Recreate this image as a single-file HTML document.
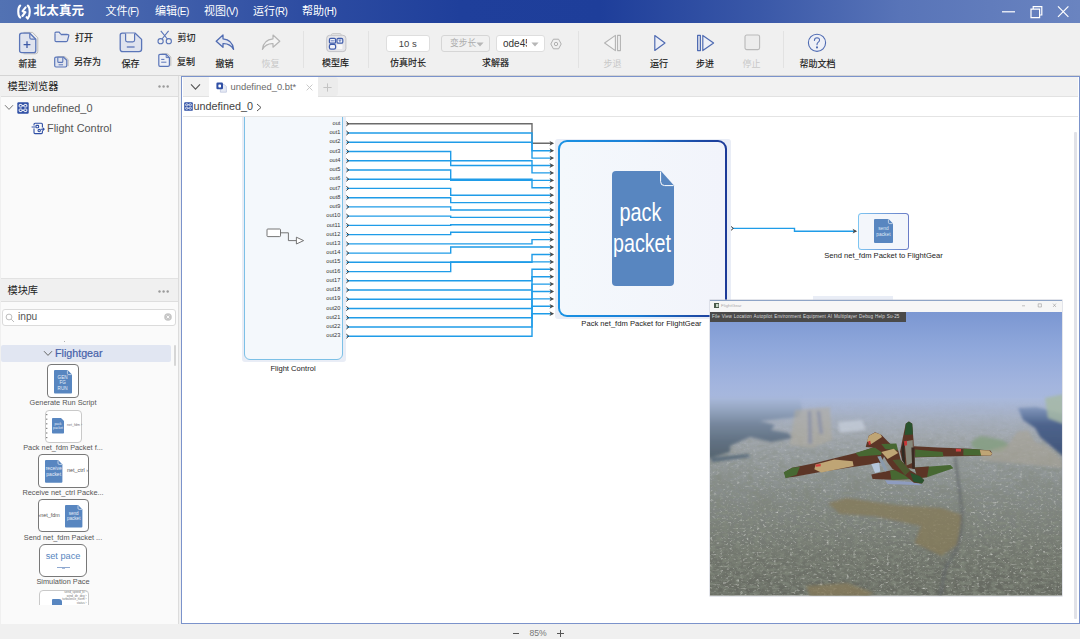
<!DOCTYPE html>
<html lang="zh-CN">
<head>
<meta charset="utf-8">
<title>北太真元</title>
<style>
*{box-sizing:border-box;margin:0;padding:0}
html,body{width:1080px;height:639px;overflow:hidden;background:#f0f0f0}
body{position:relative;font-family:"Liberation Sans","Noto Sans CJK SC",sans-serif;font-size:10px;color:#222}
.abs{position:absolute}
.t{position:absolute;white-space:nowrap;line-height:1}
.c{transform:translateX(-50%)}
svg{position:absolute;overflow:visible}
/* title */
#title{left:0;top:0;width:1080px;height:23px;background:linear-gradient(90deg,#5272b3 0,#4766ae 120px,#2e4da2 300px,#1f3f9b 460px,#1e3e9a 600px,#3a58a8 760px,#5874b8 900px,#6a84c0 1080px)}
#title .m{color:#fff;font-size:11px;top:6px}
#title .la{font-size:10px;letter-spacing:-0.55px}
#brand{color:#fff;font-size:12.5px;font-weight:bold;left:33.5px;top:5px;letter-spacing:0.2px}
/* toolbar */
#tb{left:0;top:23px;width:1080px;height:53px;background:#f0f0f0;border-bottom:1px solid #d4d4d4}
.lb{font-size:9px;color:#161616;font-weight:400;-webkit-text-stroke:0.15px #161616}
.lb.dis{color:#c8c8c8;-webkit-text-stroke:0}
.sep{position:absolute;top:31px;width:1px;height:37px;background:#e2e2e2}
.inp{position:absolute;top:35px;height:17px;border:1px solid #dedede;border-radius:3px;background:#fff;font-size:9.5px;color:#444}
/* panels */
.ph{position:absolute;left:1px;width:177px;height:21px;background:#f0f0f0;border-bottom:1px solid #dedede}
.ph .t{left:6.5px;top:5.5px;font-size:10.2px;color:#222}
.pb{position:absolute;left:1px;width:177px;background:#fafafa}
.il{font-size:7.35px;color:#555}
.bx{position:absolute;background:#fff;border:1px solid #787878;border-radius:4px}
</style>
</head>
<body>
<!-- ================= TITLE BAR ================= -->
<div id="title" class="abs">
  <svg style="left:16px;top:4px" width="16" height="16" viewBox="0 0 16 16" fill="none" stroke="#fff" stroke-width="2.1" stroke-linecap="round" stroke-linejoin="round">
    <path d="M4.2 1.6C1.6 3.4 1.6 11.2 4.2 13.6"/>
    <path d="M11.8 1.6C14.4 3.6 14.4 11.4 11.8 14.6L10.6 13.2"/>
    <path d="M9.6 3.4L6.6 7.2L9.4 8.2L6.4 12"/>
  </svg>
  <div id="brand" class="t">北太真元</div>
  <div class="t m" style="left:105.5px">文件<span class="la">(F)</span></div>
  <div class="t m" style="left:155px">编辑<span class="la">(E)</span></div>
  <div class="t m" style="left:204px">视图<span class="la">(V)</span></div>
  <div class="t m" style="left:253px">运行<span class="la">(R)</span></div>
  <div class="t m" style="left:302px">帮助<span class="la">(H)</span></div>
  <svg style="left:1000px;top:3px" width="76" height="18" viewBox="0 0 76 18" fill="none" stroke="#fff" stroke-width="1.2">
    <path d="M2 8.8H15"/>
    <path d="M31 6.2H39.6V14.6H31Z"/><path d="M33.2 6V3.6H41.8V12H39.8"/>
    <path d="M58 3.4L68.4 13.8M68.4 3.4L58 13.8"/>
  </svg>
</div>

<!-- ================= TOOLBAR ================= -->
<div id="tb" class="abs"></div>
<!-- new -->
<svg style="left:18px;top:31px" width="22" height="24" viewBox="0 0 22 24" fill="none" stroke-linejoin="round">
  <path d="M5.5 1.4H14.6L19.8 6.8V20.4Q19.8 22.8 17.4 22.8H5.5" stroke="#bdbdbd" stroke-width="1"/>
  <path d="M3.8 2.2H11.8L17.8 8.2V19.4Q17.8 21.6 15.6 21.6H3.8Q1.6 21.6 1.6 19.4V4.4Q1.6 2.2 3.8 2.2Z" fill="#dfe3ee" stroke="#5a75b8" stroke-width="1.3"/>
  <path d="M11.8 2.4V6.4Q11.8 8.2 13.6 8.2H17.6" stroke="#5a75b8" stroke-width="1.2"/>
  <path d="M9 10.2V17M5.6 13.6H12.4" stroke="#3e5aa6" stroke-width="1.3"/>
</svg>
<div class="t lb c" style="left:27.6px;top:60px">新建</div>
<!-- open -->
<svg style="left:54px;top:31px" width="16" height="12" viewBox="0 0 16 12" fill="none" stroke="#5a75b8" stroke-width="1.2" stroke-linejoin="round">
  <path d="M1 2.2Q1 1.2 2 1.2H5.2L6.8 3.4H13.4" />
  <path d="M1 2.2V9.4Q1 10.6 2.2 10.6H12.2Q13.2 10.6 13.5 9.6L14.8 4.6Q15 3.6 14 3.6H6.8" fill="#e4e7f0"/>
</svg>
<div class="t lb" style="left:75px;top:33.8px">打开</div>
<!-- save as -->
<svg style="left:54px;top:56px" width="15" height="12" viewBox="0 0 15 12" fill="none" stroke-linejoin="round">
  <path d="M3.4 0.6H10.8L14.2 3.6V10.2" stroke="#bdbdbd" stroke-width="1"/>
  <path d="M2 1.2H9.6L12.8 4.2V9.6Q12.8 11 11.4 11H2Q0.7 11 0.7 9.6V2.6Q0.7 1.2 2 1.2Z" fill="#e0e4ee" stroke="#5a75b8" stroke-width="1.2"/>
  <path d="M3.8 1.4V5.4Q3.8 6.4 4.8 6.4H7.8Q8.8 6.4 8.8 5.4V1.4" stroke="#5a75b8" stroke-width="1.1"/>
  <path d="M4.6 8.8H9" stroke="#5a75b8" stroke-width="1"/>
</svg>
<div class="t lb" style="left:74px;top:57.7px">另存为</div>
<!-- save -->
<svg style="left:119px;top:32px" width="24" height="21" viewBox="0 0 24 21" fill="none" stroke-linejoin="round">
  <path d="M3.2 1.2H16.2L22.6 7.4V17Q22.6 19.6 20 19.6H3.8Q1.2 19.6 1.2 17V3.2Q1.2 1.2 3.2 1.2Z" fill="#dfe3ee" stroke="#5a75b8" stroke-width="1.3"/>
  <path d="M6.6 1.4V8Q6.6 9.8 8.4 9.8H13.8Q15.6 9.8 15.6 8V1.4" fill="#f0f0f0" stroke="#5a75b8" stroke-width="1.2"/>
  <path d="M7.8 15H15.6" stroke="#5a75b8" stroke-width="1.3"/>
</svg>
<div class="t lb c" style="left:130.5px;top:60px">保存</div>
<!-- cut -->
<svg style="left:157px;top:30px" width="16" height="15" viewBox="0 0 16 15" fill="none" stroke="#5a75b8" stroke-width="1.1">
  <circle cx="3.6" cy="11.2" r="2.6"/><circle cx="11.8" cy="11.2" r="2.6"/>
  <path d="M5 9L11.6 0.8M10.4 9L3.8 0.8"/>
</svg>
<div class="t lb" style="left:177.5px;top:33.8px">剪切</div>
<!-- copy -->
<svg style="left:157.5px;top:53px" width="14" height="15" viewBox="0 0 14 15" fill="none" stroke-linejoin="round">
  <path d="M3.6 0.8H9.6L12.8 4V12.8" stroke="#bdbdbd" stroke-width="1"/>
  <path d="M2 1.4H8.2L11.4 4.6V12Q11.4 13.4 10 13.4H2Q0.8 13.4 0.8 12V2.6Q0.8 1.4 2 1.4Z" fill="#eef0f6" stroke="#5a75b8" stroke-width="1.2"/>
  <path d="M8.2 1.6V4.6H11.2" stroke="#5a75b8" stroke-width="1"/>
  <path d="M3.2 6.4H6.4M3.2 9.2H8.4" stroke="#5a75b8" stroke-width="1"/>
</svg>
<div class="t lb" style="left:177px;top:57.7px">复制</div>
<!-- undo -->
<svg style="left:215px;top:34px" width="20" height="17" viewBox="0 0 20 17" fill="none" stroke-linejoin="round">
  <path d="M8 1L1.2 7.2L8 13.2V9.6Q15 9.2 18.6 15.4Q17.6 5.6 8 4.8Z" fill="#e4e7f0" stroke="#4f6bb2" stroke-width="1.3"/>
</svg>
<div class="t lb c" style="left:224.5px;top:60px">撤销</div>
<!-- redo -->
<svg style="left:261px;top:34px" width="20" height="17" viewBox="0 0 20 17" fill="none" stroke-linejoin="round">
  <path d="M12 1L18.8 7.2L12 13.2V9.6Q5 9.2 1.4 15.4Q2.4 5.6 12 4.8Z" fill="#f4f4f4" stroke="#b5b5b5" stroke-width="1.2"/>
</svg>
<div class="t lb c dis" style="left:270.5px;top:60px">恢复</div>
<div class="sep" style="left:303px"></div>
<!-- model lib -->
<svg style="left:326px;top:33px" width="21" height="20" viewBox="0 0 21 20" fill="none" stroke-linejoin="round">
  <path d="M5.6 2.4V1.5Q5.6 0.7 6.4 0.7H14.2Q15 0.7 15 1.5V2.4" stroke="#c6c6c6" stroke-width="1"/>
  <rect x="0.7" y="2.3" width="19.2" height="16.3" rx="3" fill="#e5e5e9" stroke="#c3c3c7" stroke-width="1"/>
  <rect x="3.4" y="5.4" width="6.2" height="4.8" rx="1.3" fill="#f1f3fa" stroke="#3f5cab" stroke-width="1.2"/>
  <rect x="11" y="5.4" width="5.8" height="4.8" rx="1.3" fill="#f1f3fa" stroke="#3f5cab" stroke-width="1.2"/>
  <rect x="3.4" y="11.4" width="6.2" height="4.8" rx="1.6" fill="#f1f3fa" stroke="#3f5cab" stroke-width="1.2"/>
  <rect x="11.2" y="11.6" width="5.2" height="4.4" rx="0.8" fill="#f8f8f8"/>
  <path d="M4.6 7.8H7.6L8.6 7.8M12.4 7H15.4M13.9 7V9" stroke="#3f5cab" stroke-width="0.8"/>
</svg>
<div class="t lb c" style="left:335.5px;top:59.4px">模型库</div>
<div class="sep" style="left:367.5px"></div>
<!-- sim time -->
<div class="inp" style="left:386px;width:43.5px"><div class="t c" style="left:50%;top:3px">10 s</div></div>
<div class="t lb c" style="left:408px;top:59.4px">仿真时长</div>
<div class="inp" style="left:440.5px;width:49px;background:#f1f1f1;border-color:#d6d6d6;color:#adadad"><div class="t" style="left:8.5px;top:3px;font-size:8.7px">变步长</div>
  <svg style="left:34px;top:5.5px" width="8" height="5" viewBox="0 0 8 5"><path d="M0.4 0.4H7.6L4 4.4Z" fill="#b7b7b7"/></svg></div>
<div class="inp" style="left:495.5px;width:49px"><div class="t" style="left:6.5px;top:2.5px;width:23.6px;overflow:hidden;font-size:10px;color:#333">ode45</div>
  <svg style="left:34px;top:5.5px" width="8" height="5" viewBox="0 0 8 5"><path d="M0.4 0.4H7.6L4 4.4Z" fill="#b7b7b7"/></svg></div>
<svg style="left:549.5px;top:37.5px" width="12" height="12" viewBox="0 0 12 12" fill="none" stroke="#a8a8a8" stroke-width="0.9" stroke-linejoin="round">
  <path d="M3.4 1.2H8.6L11.2 6L8.6 10.8H3.4L0.8 6Z"/><circle cx="6" cy="6" r="1.7"/>
</svg>
<div class="t lb c" style="left:495.5px;top:59.4px">求解器</div>
<div class="sep" style="left:578px"></div>
<!-- step back -->
<svg style="left:603px;top:34px" width="20" height="18" viewBox="0 0 20 18" fill="none" stroke="#b3b3b3" stroke-width="1.1" stroke-linejoin="round">
  <path d="M12.4 1.4L1.6 9L12.4 16.6Z" fill="#f5f5f5"/><path d="M14.6 1.4H17.4V16.6H14.6Z" fill="#f5f5f5"/>
</svg>
<div class="t lb c dis" style="left:612.5px;top:60px">步退</div>
<!-- run -->
<svg style="left:653px;top:34px" width="14" height="18" viewBox="0 0 14 18" fill="none" stroke="#4f6bb2" stroke-width="1.2" stroke-linejoin="round">
  <path d="M1.8 1.6L12 9L1.8 16.4Z" fill="#eef0f7"/>
</svg>
<div class="t lb c" style="left:659px;top:60px">运行</div>
<!-- step fwd -->
<svg style="left:696px;top:34px" width="20" height="18" viewBox="0 0 20 18" fill="none" stroke="#4f6bb2" stroke-width="1.2" stroke-linejoin="round">
  <path d="M1.6 1.4H4.4V16.6H1.6Z" fill="#dfe3ee"/><path d="M6.8 1.4L17.6 9L6.8 16.6Z" fill="#eef0f7"/>
</svg>
<div class="t lb c" style="left:705px;top:60px">步进</div>
<!-- stop -->
<svg style="left:744px;top:34px" width="17" height="17" viewBox="0 0 17 17" fill="none">
  <rect x="1" y="1" width="14.6" height="14.6" rx="1.8" fill="#ececec" stroke="#b9b9b9" stroke-width="1.1"/>
</svg>
<div class="t lb c dis" style="left:751.5px;top:60px">停止</div>
<div class="sep" style="left:782.5px"></div>
<!-- help -->
<svg style="left:807px;top:33px" width="20" height="20" viewBox="0 0 20 20" fill="none" stroke="#4f6bb2" stroke-width="1.1" stroke-linecap="round">
  <circle cx="10" cy="9.8" r="8.6" fill="#eef0f7"/>
  <path d="M7.4 7.4Q7.6 4.8 10 4.8Q12.6 4.9 12.5 7.2Q12.4 8.6 10.8 9.6Q10 10.2 10 11.8"/>
  <circle cx="10" cy="14.4" r="0.5" fill="#4f6bb2"/>
</svg>
<div class="t lb c" style="left:817.5px;top:60px">帮助文档</div>

<!-- ================= LEFT PANELS ================= -->
<div class="abs" style="left:0;top:76px;width:181px;height:548px;background:#f0f0f0"></div>
<div class="abs" style="left:178px;top:76px;width:1px;height:548px;background:#dcdcdc"></div>
<!-- model browser -->
<div class="ph" style="top:76px"><div class="t">模型浏览器</div>
  <svg style="left:157px;top:9px" width="12" height="3" viewBox="0 0 12 3"><circle cx="1.5" cy="1.5" r="1.2" fill="#9a9a9a"/><circle cx="5.6" cy="1.5" r="1.2" fill="#9a9a9a"/><circle cx="9.7" cy="1.5" r="1.2" fill="#9a9a9a"/></svg>
</div>
<div class="pb" style="top:97px;height:181px"></div>
<svg style="left:4px;top:104px" width="10" height="7" viewBox="0 0 10 7" fill="none" stroke="#777" stroke-width="1"><path d="M1 1.2L5 5.4L9 1.2"/></svg>
<svg style="left:17px;top:102px" width="12" height="12" viewBox="0 0 12 12">
  <rect x="0.3" y="0.3" width="11.4" height="11.4" rx="1.2" fill="#2f4fa5"/>
  <g fill="none" stroke="#fff" stroke-width="1"><rect x="2.2" y="2.4" width="2.8" height="2.6" rx="0.6"/><rect x="7" y="2.4" width="2.8" height="2.6" rx="0.6"/><rect x="2.2" y="7" width="2.8" height="2.6" rx="0.6"/><rect x="7" y="7" width="2.8" height="2.6" rx="0.6"/><path d="M5 3.7H7M5 8.3H7"/></g>
</svg>
<div class="t" style="left:32.5px;top:103px;font-size:10.9px;color:#555">undefined_0</div>
<svg style="left:30.5px;top:121.5px" width="14" height="13" viewBox="0 0 14 13" fill="none" stroke="#2f4fa5" stroke-width="1.1" stroke-linejoin="round">
  <path d="M3 3.6V2.2Q3 1.2 4 1.2H10.4Q11.4 1.2 11.4 2.2V5.6M11.4 8.6V10.6Q11.4 11.6 10.4 11.6H4Q3 11.6 3 10.6V6.4"/>
  <path d="M0.6 5H4.4M9.6 7.2H13.2M11.8 5.8L13.2 7.2L11.8 8.6"/>
  <rect x="5" y="3.4" width="2.6" height="2.4" rx="0.5"/><circle cx="8.2" cy="8.6" r="1.2"/>
</svg>
<div class="t" style="left:47px;top:123px;font-size:10.9px;color:#555">Flight Control</div>

<div class="abs" style="left:1px;top:277.5px;width:177px;height:1px;background:#e2e2e2"></div>
<!-- block library -->
<div class="ph" style="top:280.5px"><div class="t">模块库</div>
  <svg style="left:157px;top:9px" width="12" height="3" viewBox="0 0 12 3"><circle cx="1.5" cy="1.5" r="1.2" fill="#9a9a9a"/><circle cx="5.6" cy="1.5" r="1.2" fill="#9a9a9a"/><circle cx="9.7" cy="1.5" r="1.2" fill="#9a9a9a"/></svg>
</div>
<div class="pb" style="top:301.5px;height:322px"></div>
<div class="abs" style="left:2.2px;top:308.5px;width:173.5px;height:17px;background:#fff;border:1px solid #dbdbdb;border-radius:3px"></div>
<svg style="left:5px;top:312.5px" width="10" height="10" viewBox="0 0 10 10" fill="none" stroke="#b5b5b5" stroke-width="0.9"><circle cx="4" cy="4" r="2.9"/><path d="M6.2 6.2L9 9"/></svg>
<div class="t" style="left:18px;top:312px;font-size:10.2px;color:#555">inpu</div>
<svg style="left:163.5px;top:313px" width="8" height="8" viewBox="0 0 8 8"><circle cx="4" cy="4" r="3.8" fill="#c6c6c6"/><path d="M2.6 2.6L5.4 5.4M5.4 2.6L2.6 5.4" stroke="#fff" stroke-width="0.9"/></svg>
<div class="abs" style="left:64px;top:340.5px;width:1px;height:1px;background:#b0b0b0"></div>
<div class="abs" style="left:1px;top:344.5px;width:169.5px;height:17.5px;background:#e1e6f2;border-radius:2px"></div>
<svg style="left:42.5px;top:350px" width="10" height="7" viewBox="0 0 10 7" fill="none" stroke="#666" stroke-width="1"><path d="M1 1.2L5 5.4L9 1.2"/></svg>
<div class="t" style="left:55px;top:347.5px;font-size:10.7px;color:#4661a9;-webkit-text-stroke:0.2px #4661a9">Flightgear</div>
<div class="abs" style="left:173.5px;top:345px;width:2.5px;height:21px;background:#d6d6d6;border-radius:1px"></div>

<!-- item 1 -->
<div class="bx" style="left:47px;top:364px;width:32px;height:34px"></div>
<svg style="left:54.3px;top:369.5px" width="18" height="23.5" viewBox="0 0 18 23.5"><path d="M1 0H13.6L18 4.6V22.5Q18 23.5 17 23.5H1Q0 23.5 0 22.5V1Q0 0 1 0Z" fill="#5886c0"/><path d="M13.4 0.4V3.4Q13.4 4.6 14.6 4.6H17.6" fill="none" stroke="#fff" stroke-width="0.6"/>
  <g font-family="'Liberation Sans',sans-serif" font-size="4.6" fill="#e8eef8" text-anchor="middle"><text x="8.6" y="8.6">GEN</text><text x="8.6" y="14.2">FG</text><text x="8.6" y="19.8">RUN</text></g></svg>
<div class="t il c" style="left:63px;top:398.5px">Generate Run Script</div>
<!-- item 2 -->
<div class="bx" style="left:45px;top:409.5px;width:37px;height:33px;border-color:#c9c9c9"></div>
<svg style="left:52px;top:418px" width="12" height="15.5" viewBox="0 0 12 15.5"><path d="M0.8 0H9L12 3V14.7Q12 15.5 11.2 15.5H0.8Q0 15.5 0 14.7V0.8Q0 0 0.8 0Z" fill="#5886c0"/>
  <g font-family="'Liberation Sans',sans-serif" font-size="3.4" fill="#e8eef8" text-anchor="middle"><text x="6" y="7">pack</text><text x="6" y="11">packet</text></g></svg>
<svg style="left:45px;top:412px" width="4" height="28" viewBox="0 0 4 28" fill="#888"><rect x="1" y="2" width="1.4" height="1.2"/><rect x="1" y="6.6" width="1.4" height="1.2"/><rect x="1" y="11.2" width="1.4" height="1.2"/><rect x="1" y="15.8" width="1.4" height="1.2"/><rect x="1" y="20.4" width="1.4" height="1.2"/><rect x="1" y="25" width="1.4" height="1.2"/></svg>
<div class="t" style="left:67px;top:423.5px;font-size:3.6px;color:#777">net_fdm ›</div>
<div class="t il c" style="left:63px;top:443.5px">Pack net_fdm Packet f...</div>
<!-- item 3 -->
<div class="bx" style="left:38px;top:454px;width:50.5px;height:33.5px"></div>
<svg style="left:45.2px;top:459.5px" width="17.4" height="22.8" viewBox="0 0 17.4 22.8"><path d="M1 0H13.2L17.4 4.4V21.8Q17.4 22.8 16.4 22.8H1Q0 22.8 0 21.8V1Q0 0 1 0Z" fill="#5886c0"/><path d="M13 0.4V3.2Q13 4.4 14.2 4.4H17" fill="none" stroke="#fff" stroke-width="0.6"/>
  <g font-family="'Liberation Sans',sans-serif" font-size="5" fill="#e8eef8" text-anchor="middle"><text x="8.7" y="9.6">receive</text><text x="8.7" y="15.6">packet</text></g></svg>
<div class="t" style="left:67px;top:467.5px;font-size:5.4px;color:#555">net_ctrl ›</div>
<div class="t il c" style="left:63px;top:488.5px">Receive net_ctrl Packe...</div>
<!-- item 4 -->
<div class="bx" style="left:38px;top:499px;width:50.5px;height:33px"></div>
<svg style="left:64.8px;top:504.5px" width="17.4" height="22.4" viewBox="0 0 17.4 22.4"><path d="M1 0H13.2L17.4 4.4V21.4Q17.4 22.4 16.4 22.4H1Q0 22.4 0 21.4V1Q0 0 1 0Z" fill="#5886c0"/><path d="M13 0.4V3.2Q13 4.4 14.2 4.4H17" fill="none" stroke="#fff" stroke-width="0.6"/>
  <g font-family="'Liberation Sans',sans-serif" font-size="4.6" fill="#e8eef8" text-anchor="middle"><text x="8.7" y="10">send</text><text x="8.7" y="15.4">packet</text></g></svg>
<div class="t" style="left:38.5px;top:512.5px;font-size:5.4px;color:#555">‹net_fdm</div>
<div class="t il c" style="left:63px;top:533.5px">Send net_fdm Packet ...</div>
<!-- item 5 -->
<div class="bx" style="left:39px;top:544px;width:48px;height:32.5px;border-radius:6px;border-width:1.2px"></div>
<div class="t c" style="left:63px;top:551.5px;font-size:9.2px;color:#5886c0">set pace</div>
<div class="abs" style="left:56.5px;top:566.5px;width:13px;height:1px;background:#8fa9d0"></div>
<div class="abs" style="left:61.5px;top:567.5px;width:3px;height:1px;background:#a9bcda"></div>
<div class="t il c" style="left:63px;top:578px">Simulation Pace</div>
<!-- item 6 (clipped) -->
<div class="abs" style="left:38px;top:589px;width:51px;height:15.5px;overflow:hidden">
  <div class="bx" style="left:1px;top:0.5px;width:49.5px;height:33px;border-color:#c9c9c9"></div>
  <div class="abs" style="left:14px;top:10px;width:9.5px;height:10px;background:#5886c0;border-radius:1px 3px 0 0"></div>
  <div class="t" style="right:2.5px;top:2.2px;font-size:3px;color:#777;text-align:right;line-height:3.5px">send_speed_kt ›<br>wind_dir_deg ›<br>turbulence_norm ›<br>status ›</div>
</div>


<!-- ================= MAIN AREA ================= -->
<div class="abs" style="left:181px;top:75.5px;width:898.7px;height:548.5px;background:#fff;border:1.8px solid #7b93cb"></div>
<!-- tab bar -->
<div class="abs" style="left:182.8px;top:77.3px;width:895px;height:19.7px;background:#f2f2f2;border-bottom:1px solid #e2e2e2"></div>
<div class="abs" style="left:209px;top:77px;width:108.5px;height:20px;background:#fff"></div>
<div class="abs" style="left:317.5px;top:77px;width:20px;height:19px;background:#ececec;border-radius:0 3px 3px 0"></div>
<svg style="left:189.5px;top:83px" width="11" height="8" viewBox="0 0 11 8" fill="none" stroke="#555" stroke-width="1.1"><path d="M1 1.4L5.5 6.2L10 1.4"/></svg>
<svg style="left:215.5px;top:81.5px" width="11" height="11" viewBox="0 0 11 11">
  <path d="M4.4 2.4H8.2L10.4 4.6V10.2H4.4Z" fill="#e6eaf4" stroke="#b9c2dc" stroke-width="0.7"/>
  <rect x="0.4" y="0.6" width="6.6" height="6.6" rx="1.2" fill="#2f4fa5"/>
  <rect x="2.4" y="2.4" width="2.6" height="3" rx="0.6" fill="#fff"/>
</svg>
<div class="t" style="left:230.5px;top:82px;font-size:9.4px;color:#6a6a6a">undefined_0.bt*</div>
<svg style="left:305.5px;top:83.5px" width="7" height="7" viewBox="0 0 7 7" stroke="#c3c3c3" stroke-width="0.9"><path d="M0.6 0.6L6.4 6.4M6.4 0.6L0.6 6.4"/></svg>
<svg style="left:322.5px;top:82.5px" width="9" height="9" viewBox="0 0 9 9" stroke="#c3c3c3" stroke-width="1"><path d="M4.5 0.4V8.6M0.4 4.5H8.6"/></svg>
<!-- breadcrumb -->
<div class="abs" style="left:182.8px;top:116px;width:895px;height:1px;background:#e4e4e4"></div>
<svg style="left:183.5px;top:102px" width="9" height="9" viewBox="0 0 12 12">
  <rect x="0.3" y="0.3" width="11.4" height="11.4" rx="1.2" fill="#2f4fa5"/>
  <g fill="none" stroke="#fff" stroke-width="1"><rect x="2.2" y="2.4" width="2.8" height="2.6" rx="0.6"/><rect x="7" y="2.4" width="2.8" height="2.6" rx="0.6"/><rect x="2.2" y="7" width="2.8" height="2.6" rx="0.6"/><rect x="7" y="7" width="2.8" height="2.6" rx="0.6"/><path d="M5 3.7H7M5 8.3H7"/></g>
</svg>
<div class="t" style="left:193.5px;top:101px;font-size:10.8px;color:#444">undefined_0</div>
<svg style="left:256px;top:103px" width="6" height="9" viewBox="0 0 6 9" fill="none" stroke="#555" stroke-width="1"><path d="M1 1L5 4.5L1 8"/></svg>
<!-- v scrollbar -->
<div class="abs" style="left:1074px;top:132px;width:2.5px;height:486.5px;background:#e1e2e8;border-radius:1px"></div>

<!-- canvas (clipped) -->
<div class="abs" style="left:182.5px;top:117px;width:890px;height:505px;overflow:hidden">
<div class="abs" style="left:-182.5px;top:-117px;width:1080px;height:639px">
  <!-- Flight Control block -->
  <div class="abs" style="left:241.5px;top:100px;width:104.5px;height:261.5px;background:#e9edf6;border-radius:3px"></div>
  <div class="abs" style="left:244px;top:100px;width:98.7px;height:259.5px;background:#f4f8fc;border:1.2px solid #7cc0e6;border-radius:6px"></div>
  <svg style="left:266px;top:227px" width="40" height="20" viewBox="0 0 40 20" fill="none" stroke="#666" stroke-width="0.9">
    <rect x="1" y="2" width="13.5" height="7.6" rx="0.8" fill="#fff"/>
    <path d="M14.5 5.8H22.4V13.6H30.4"/><path d="M30.4 10.2L37.6 13.6L30.4 17Z" fill="#fff"/>
  </svg>
  <div class="t c" style="left:293px;top:364.5px;font-size:7.6px;color:#222">Flight Control</div>
  <svg style="left:0;top:0" width="1080" height="639" viewBox="0 0 1080 639">
    <g font-family="'Liberation Sans','Noto Sans CJK SC',sans-serif" font-size="5.6" fill="#333" text-anchor="end">
<text x="340.3" y="124.9">out</text>
<text x="340.3" y="134.1">out1</text>
<text x="340.3" y="143.4">out2</text>
<text x="340.3" y="152.6">out3</text>
<text x="340.3" y="161.8">out4</text>
<text x="340.3" y="171.1">out5</text>
<text x="340.3" y="180.3">out6</text>
<text x="340.3" y="189.5">out7</text>
<text x="340.3" y="198.8">out8</text>
<text x="340.3" y="208.0">out9</text>
<text x="340.3" y="217.2">out10</text>
<text x="340.3" y="226.5">out11</text>
<text x="340.3" y="235.7">out12</text>
<text x="340.3" y="245.0">out13</text>
<text x="340.3" y="254.2">out14</text>
<text x="340.3" y="263.4">out15</text>
<text x="340.3" y="272.7">out16</text>
<text x="340.3" y="281.9">out17</text>
<text x="340.3" y="291.1">out18</text>
<text x="340.3" y="300.4">out19</text>
<text x="340.3" y="309.6">out20</text>
<text x="340.3" y="318.8">out21</text>
<text x="340.3" y="328.1">out22</text>
<text x="340.3" y="337.3">out23</text>
    </g>
    <g fill="none" stroke-width="1.4">
<path d="M346.6 123.8H532.0V143.3H552.5" stroke="#6b6b6b"/>
<path d="M346.6 133.0H532.0V150.7H552.5" stroke="#1f9ce8"/>
<path d="M346.6 142.3H532.0V158.1H552.5" stroke="#1f9ce8"/>
<path d="M346.6 151.5H450.7V165.5H552.5" stroke="#1f9ce8"/>
<path d="M346.6 160.7H532.0V172.9H552.5" stroke="#1f9ce8"/>
<path d="M346.6 170.0H450.7V180.4H552.5" stroke="#1f9ce8"/>
<path d="M346.6 179.2H532.0V187.8H552.5" stroke="#1f9ce8"/>
<path d="M346.6 188.4H450.7V195.2H552.5" stroke="#1f9ce8"/>
<path d="M346.6 197.7H450.7V202.6H552.5" stroke="#1f9ce8"/>
<path d="M346.6 206.9H450.7V210.0H552.5" stroke="#1f9ce8"/>
<path d="M346.6 216.1H450.7V217.4H552.5" stroke="#1f9ce8"/>
<path d="M346.6 225.4H450.7V224.8H552.5" stroke="#1f9ce8"/>
<path d="M346.6 234.6H450.7V232.2H552.5" stroke="#1f9ce8"/>
<path d="M346.6 243.9H532.0V239.6H552.5" stroke="#1f9ce8"/>
<path d="M346.6 253.1H450.7V247.0H552.5" stroke="#1f9ce8"/>
<path d="M346.6 262.3H532.0V254.5H552.5" stroke="#1f9ce8"/>
<path d="M346.6 271.6H450.7V261.9H552.5" stroke="#1f9ce8"/>
<path d="M346.6 280.8H532.0V269.3H552.5" stroke="#1f9ce8"/>
<path d="M346.6 290.0H532.0V276.7H552.5" stroke="#1f9ce8"/>
<path d="M346.6 299.3H532.0V284.1H552.5" stroke="#1f9ce8"/>
<path d="M346.6 308.5H532.0V291.5H552.5" stroke="#1f9ce8"/>
<path d="M346.6 317.7H532.0V298.9H552.5" stroke="#1f9ce8"/>
<path d="M346.6 327.0H532.0V306.3H552.5" stroke="#1f9ce8"/>
<path d="M346.6 336.2H532.0V313.7H552.5" stroke="#1f9ce8"/>
    <path d="M732.5 228.4H794.5V231.2H856" stroke="#1f9ce8"/>
    </g>
    <g fill="none" stroke="#3c3c3c" stroke-width="1">
<path d="M346.3 121.7L348.8 123.8L346.3 125.9"/>
<path d="M346.3 130.9L348.8 133.0L346.3 135.1"/>
<path d="M346.3 140.2L348.8 142.3L346.3 144.4"/>
<path d="M346.3 149.4L348.8 151.5L346.3 153.6"/>
<path d="M346.3 158.6L348.8 160.7L346.3 162.8"/>
<path d="M346.3 167.9L348.8 170.0L346.3 172.1"/>
<path d="M346.3 177.1L348.8 179.2L346.3 181.3"/>
<path d="M346.3 186.3L348.8 188.4L346.3 190.5"/>
<path d="M346.3 195.6L348.8 197.7L346.3 199.8"/>
<path d="M346.3 204.8L348.8 206.9L346.3 209.0"/>
<path d="M346.3 214.0L348.8 216.1L346.3 218.2"/>
<path d="M346.3 223.3L348.8 225.4L346.3 227.5"/>
<path d="M346.3 232.5L348.8 234.6L346.3 236.7"/>
<path d="M346.3 241.8L348.8 243.9L346.3 246.0"/>
<path d="M346.3 251.0L348.8 253.1L346.3 255.2"/>
<path d="M346.3 260.2L348.8 262.3L346.3 264.4"/>
<path d="M346.3 269.5L348.8 271.6L346.3 273.7"/>
<path d="M346.3 278.7L348.8 280.8L346.3 282.9"/>
<path d="M346.3 287.9L348.8 290.0L346.3 292.1"/>
<path d="M346.3 297.2L348.8 299.3L346.3 301.4"/>
<path d="M346.3 306.4L348.8 308.5L346.3 310.6"/>
<path d="M346.3 315.6L348.8 317.7L346.3 319.8"/>
<path d="M346.3 324.9L348.8 327.0L346.3 329.1"/>
<path d="M346.3 334.1L348.8 336.2L346.3 338.3"/>
    <path d="M730.6 226.1L733.4 228.4L730.6 230.7"/>
    </g>
    <g fill="#4a4a4a">
<path d="M549.5 140.9L554.1 143.3L549.5 145.7L550.7 143.3Z"/>
<path d="M549.5 148.3L554.1 150.7L549.5 153.1L550.7 150.7Z"/>
<path d="M549.5 155.7L554.1 158.1L549.5 160.5L550.7 158.1Z"/>
<path d="M549.5 163.1L554.1 165.5L549.5 167.9L550.7 165.5Z"/>
<path d="M549.5 170.5L554.1 172.9L549.5 175.3L550.7 172.9Z"/>
<path d="M549.5 178.0L554.1 180.4L549.5 182.8L550.7 180.4Z"/>
<path d="M549.5 185.4L554.1 187.8L549.5 190.2L550.7 187.8Z"/>
<path d="M549.5 192.8L554.1 195.2L549.5 197.6L550.7 195.2Z"/>
<path d="M549.5 200.2L554.1 202.6L549.5 205.0L550.7 202.6Z"/>
<path d="M549.5 207.6L554.1 210.0L549.5 212.4L550.7 210.0Z"/>
<path d="M549.5 215.0L554.1 217.4L549.5 219.8L550.7 217.4Z"/>
<path d="M549.5 222.4L554.1 224.8L549.5 227.2L550.7 224.8Z"/>
<path d="M549.5 229.8L554.1 232.2L549.5 234.6L550.7 232.2Z"/>
<path d="M549.5 237.2L554.1 239.6L549.5 242.0L550.7 239.6Z"/>
<path d="M549.5 244.6L554.1 247.0L549.5 249.4L550.7 247.0Z"/>
<path d="M549.5 252.1L554.1 254.5L549.5 256.9L550.7 254.5Z"/>
<path d="M549.5 259.5L554.1 261.9L549.5 264.3L550.7 261.9Z"/>
<path d="M549.5 266.9L554.1 269.3L549.5 271.7L550.7 269.3Z"/>
<path d="M549.5 274.3L554.1 276.7L549.5 279.1L550.7 276.7Z"/>
<path d="M549.5 281.7L554.1 284.1L549.5 286.5L550.7 284.1Z"/>
<path d="M549.5 289.1L554.1 291.5L549.5 293.9L550.7 291.5Z"/>
<path d="M549.5 296.5L554.1 298.9L549.5 301.3L550.7 298.9Z"/>
<path d="M549.5 303.9L554.1 306.3L549.5 308.7L550.7 306.3Z"/>
<path d="M549.5 311.3L554.1 313.7L549.5 316.1L550.7 313.7Z"/>
    <path d="M852.6 228.8L857.2 231.2L852.6 233.6L853.8 231.2Z"/>
    </g>
  </svg>
  <!-- Pack block -->
  <div class="abs" style="left:555px;top:139px;width:176px;height:180px;background:#e9edf6;border-radius:3px"></div>
  <div class="abs" style="left:558px;top:139.8px;width:169px;height:177.4px;border-radius:9px;background:linear-gradient(90deg,#1a93e4 0,#1b7fd6 45%,#1c48a4 85%,#1c3a98 100%)"></div>
  <div class="abs" style="left:560px;top:141.8px;width:165px;height:173.4px;border-radius:7px;background:linear-gradient(90deg,#f4f8fc,#f2f4fb)"></div>
  <svg style="left:611.8px;top:171px" width="62" height="115" viewBox="0 0 62 115">
    <path d="M4 0H49L62 14.5V111Q62 115 58 115H4Q0 115 0 111V4Q0 0 4 0Z" fill="#5886c0"/>
    <path d="M48.6 0.6V10.6Q48.6 14.6 52.6 14.6H61.6" fill="none" stroke="#fff" stroke-width="1"/>
    <g font-family="'Liberation Sans',sans-serif" font-size="25" fill="#fff" text-anchor="middle"><text x="28.5" y="49.5" textLength="42" lengthAdjust="spacingAndGlyphs">pack</text><text x="30" y="81" textLength="58" lengthAdjust="spacingAndGlyphs">packet</text></g>
  </svg>
  <div class="t c" style="left:641.5px;top:320px;font-size:7.6px;color:#222">Pack net_fdm Packet for FlightGear</div>
  <!-- Send block -->
  <div class="abs" style="left:858px;top:212.5px;width:51px;height:37px;border-radius:3.5px;background:linear-gradient(90deg,#7ec6f2,#6a7cc6)"></div>
  <div class="abs" style="left:859px;top:213.5px;width:49px;height:35px;border-radius:2.5px;background:#f3f6fb"></div>
  <svg style="left:874px;top:219px" width="19" height="24" viewBox="0 0 19 24">
    <path d="M1 0H14.6L19 4.6V23Q19 24 18 24H1Q0 24 0 23V1Q0 0 1 0Z" fill="#5886c0"/>
    <path d="M14.4 0.3V3.4Q14.4 4.6 15.6 4.6H18.6" fill="none" stroke="#fff" stroke-width="0.6"/>
    <g font-family="'Liberation Sans',sans-serif" font-size="4.8" fill="#dfe8f5" text-anchor="middle"><text x="9.4" y="11.2">send</text><text x="9.4" y="16.6">packet</text></g>
  </svg>
  <div class="t c" style="left:883.5px;top:251.5px;font-size:7.6px;color:#222">Send net_fdm Packet to FlightGear</div>
  <!-- hidden block halo above FG window -->
  <div class="abs" style="left:813px;top:296px;width:80px;height:4px;background:#e9edf6"></div>
  <div class="abs" style="left:709.5px;top:395px;width:1.5px;height:10px;background:#2f4fa5"></div>

<!-- FlightGear window -->
  <div class="abs" style="left:710px;top:299.5px;width:352px;height:296px;background:#f6f6f6;box-shadow:0 0 0 0.5px #c8ccd8;border-top:0.8px solid #8ea4c6"></div>
  <svg style="left:713.5px;top:303px" width="5" height="5" viewBox="0 0 5 5"><rect width="5" height="5" fill="#4a5a4a"/><rect x="2" y="1" width="2.4" height="3" fill="#c8d8c8"/></svg>
  <div class="t" style="left:721px;top:304.2px;font-size:4.4px;color:#ababab">FlightGear</div>
  <svg style="left:1020px;top:302px" width="36" height="7" viewBox="0 0 36 7" fill="none" stroke="#8a8a8a" stroke-width="0.5"><path d="M2 3.8H5M18.2 1.8H21.4V5H18.2ZM33 1.6L36 5M36 1.6L33 5"/></svg>
  <svg style="left:710px;top:312px" width="352" height="283.5" viewBox="0 0 352 283.5">
    <defs>
      <linearGradient id="gsky" x1="0" y1="0" x2="0" y2="1">
        <stop offset="0" stop-color="#7b97d2"/><stop offset="0.4" stop-color="#90a8db"/><stop offset="0.8" stop-color="#a3b5de"/><stop offset="1" stop-color="#a9b9dc"/>
      </linearGradient>
      <linearGradient id="ggr" x1="0" y1="0" x2="0" y2="1">
        <stop offset="0" stop-color="#a9b9dc"/><stop offset="0.05" stop-color="#a8b5d0"/><stop offset="0.12" stop-color="#a6afbe"/><stop offset="0.2" stop-color="#a3a9b0"/><stop offset="0.3" stop-color="#999fa2"/><stop offset="0.45" stop-color="#8a908f"/><stop offset="0.6" stop-color="#7f8480"/><stop offset="0.8" stop-color="#70746c"/><stop offset="1" stop-color="#656860"/>
      </linearGradient>
      <linearGradient id="gwl" x1="0" y1="0" x2="0" y2="1">
        <stop offset="0" stop-color="#a8b8da"/><stop offset="0.2" stop-color="#93a4bf"/><stop offset="0.45" stop-color="#74859b"/><stop offset="0.75" stop-color="#5f6f80"/><stop offset="1" stop-color="#566570"/>
      </linearGradient>
      <linearGradient id="gwr" x1="0" y1="0" x2="0" y2="1">
        <stop offset="0" stop-color="#8297bc"/><stop offset="0.35" stop-color="#4d638c"/><stop offset="1" stop-color="#3f5478"/>
      </linearGradient>
      <filter id="fb1" x="-10%" y="-10%" width="120%" height="120%"><feGaussianBlur stdDeviation="1.6"/></filter>
      <filter id="fb2" x="-5%" y="-5%" width="110%" height="110%"><feGaussianBlur stdDeviation="0.5"/></filter>
      <filter id="fnoise" x="0" y="0" width="100%" height="100%">
        <feTurbulence type="fractalNoise" baseFrequency="0.3 0.5" numOctaves="3" seed="7" result="n"/>
        <feColorMatrix in="n" type="matrix" values="0 0 0 0 0.74  0 0 0 0 0.75  0 0 0 0 0.71  2.4 1.6 0 0 -2.15"/>
      </filter>
      <filter id="fnoise2" x="0" y="0" width="100%" height="100%">
        <feTurbulence type="fractalNoise" baseFrequency="0.16 0.3" numOctaves="3" seed="23" result="n"/>
        <feColorMatrix in="n" type="matrix" values="0 0 0 0 0.23  0 0 0 0 0.26  0 0 0 0 0.21  2.2 1.6 0 0 -1.6"/>
      </filter>
      <filter id="fnoise3" x="0" y="0" width="100%" height="100%">
        <feTurbulence type="fractalNoise" baseFrequency="0.045 0.09" numOctaves="2" seed="11" result="n"/>
        <feColorMatrix in="n" type="matrix" values="0 0 0 0 0.2  0 0 0 0 0.22  0 0 0 0 0.18  1.8 1.4 0 0 -1.35"/>
      </filter>
      <linearGradient id="gfade" x1="0" y1="0" x2="0" y2="1"><stop offset="0" stop-color="#fff" stop-opacity="0"/><stop offset="0.12" stop-color="#fff" stop-opacity="0.1"/><stop offset="0.3" stop-color="#fff" stop-opacity="0.5"/><stop offset="0.6" stop-color="#fff" stop-opacity="1"/><stop offset="1" stop-color="#fff" stop-opacity="1"/></linearGradient>
      <mask id="mfade"><rect x="0" y="88" width="352" height="196" fill="url(#gfade)"/></mask>
      <clipPath id="cscene"><rect x="0" y="0" width="352" height="283.5"/></clipPath>
    </defs>
    <g clip-path="url(#cscene)">
      <rect x="0" y="0" width="352" height="92" fill="url(#gsky)"/>
      <rect x="0" y="86" width="352" height="198" fill="url(#ggr)"/>
      <g mask="url(#mfade)">
        <rect x="0" y="88" width="352" height="196" filter="url(#fnoise)" opacity="0.75"/>
        <rect x="0" y="88" width="352" height="196" filter="url(#fnoise2)" opacity="0.7"/>
        <rect x="0" y="88" width="352" height="196" filter="url(#fnoise3)" opacity="0.45"/>
      </g>
      <g filter="url(#fb1)">
<polygon points="-2.0,86.0 90.0,86.0 92.0,98.0 88.0,105.0 50.0,109.0 65.0,113.0 61.0,118.0 78.0,121.0 83.0,126.0 61.0,130.0 40.0,125.0 20.0,134.0 20.0,140.0 1.0,146.0 -2.0,146.0" fill="url(#gwl)" />
<polygon points="1.0,146.0 38.0,142.0 40.0,145.0 2.0,150.0" fill="#596a7a" />
<polygon points="308.0,96.0 326.0,95.0 354.0,102.0 354.0,145.0 342.0,135.0 330.0,125.0 325.0,116.0 313.0,108.0" fill="url(#gwr)" />
<polygon points="335.0,86.0 354.0,82.0 354.0,112.0 338.0,106.0" fill="#a6b8a6" opacity="0.85"/>
<polygon points="261.0,130.0 270.0,124.0 292.0,128.0 299.0,133.0 292.0,140.0 275.0,140.0 263.0,136.0" fill="#869e84" opacity="0.9"/>
<polygon points="275.0,140.0 298.0,133.0 307.0,120.0 318.0,118.0 325.0,130.0 338.0,135.0 352.0,148.0 352.0,156.0 270.0,148.0" fill="#a9a496" opacity="0.6"/>
<polygon points="85.0,98.0 120.0,95.0 122.0,128.0 102.0,136.0 80.0,133.0" fill="#b0ab9c" opacity="0.55"/>
<polygon points="98.0,99.0 101.0,99.0 102.0,132.0 98.5,132.0" fill="#7f88a6" opacity="0.7"/>
<polygon points="107.0,99.0 110.0,99.0 113.0,122.0 109.5,122.0" fill="#7f88a6" opacity="0.7"/>
<polygon points="128.0,110.0 152.0,108.0 156.0,118.0 130.0,121.0" fill="#d3dae8" opacity="0.55"/>
<polygon points="118.0,191.0 137.0,186.0 184.0,193.0 231.5,196.0 252.0,203.0 247.0,233.0 231.5,244.0 204.5,231.0 211.0,214.0 164.0,204.0 130.0,202.0" fill="#857a5a" opacity="0.78"/>
<polygon points="96.0,274.0 137.0,271.0 164.0,281.0 157.0,284.0 100.0,284.0" fill="#8a7c5c" opacity="0.75"/>
<path d="M245 145C250 190 262 220 236 255L230 284" fill="none" stroke="#5d6166" stroke-width="2.4" opacity="0.75"/>
      </g>
      <g filter="url(#fb2)">
<polygon points="74.4,160.2 82.2,155.8 104.4,151.3 124.4,146.2 148.9,140.2 164.4,135.1 175.6,141.3 171.1,150.7 144.4,154.7 108.9,160.2 84.4,164.7 75.6,165.8" fill="#5c3628" />
<polygon points="73.8,160.2 82.2,155.8 90.0,154.7 86.7,162.7 75.6,166.2" fill="#466832" />
<polygon points="105.6,152.4 124.4,147.6 142.7,149.3 143.6,154.0 111.1,160.4 104.4,157.3" fill="#bfa574" />
<polygon points="145.6,140.9 164.4,135.3 172.2,138.7 171.1,142.7 148.9,144.4" fill="#466832" />
<polygon points="203.9,134.3 227.7,135.6 260.1,136.8 280.4,138.4 282.2,141.6 281.0,143.4 260.1,143.9 234.0,144.6 217.7,145.1 204.5,145.6" fill="#5c3628" />
<polygon points="205.2,137.5 232.7,140.0 233.4,144.5 205.2,145.1" fill="#466832" />
<polygon points="253.4,136.8 270.3,137.6 271.3,143.4 253.4,143.4" fill="#466832" />
<polygon points="269.8,138.1 279.1,138.6 282.2,141.4 280.6,143.4 271.1,143.4" fill="#bfa574" />
<polygon points="161.3,162.5 181.4,158.2 198.9,156.9 202.7,166.9 181.4,167.7 162.6,166.9" fill="#5c3628" />
<polygon points="180.1,158.4 198.9,156.9 202.7,166.9 181.4,167.7" fill="#466832" />
<polygon points="204.5,155.6 220.2,154.4 240.3,153.1 243.4,156.3 217.7,165.0 207.7,166.3" fill="#466832" />
<polygon points="204.5,155.6 218.9,154.5 217.1,165.3 207.7,166.3" fill="#5c3628" />
<polygon points="161.3,151.9 169.1,150.4 170.3,159.4 165.1,160.9" fill="#b6c6da" />
<polygon points="167.3,144.6 170.8,143.9 177.6,158.2 175.1,159.4" fill="#8a9aac" />
<polygon points="175.1,168.2 202.7,169.9 213.3,173.2 177.6,171.9" fill="#8e9cc0" />
<polygon points="155.7,135.0 158.8,123.7 165.1,120.3 171.6,123.1 177.6,129.3 182.0,133.3 188.2,138.4 190.8,148.1 200.2,158.2 210.2,164.2 214.2,168.2 211.7,171.4 203.9,170.7 195.1,163.4 182.6,156.9 177.6,150.6 171.3,140.0 165.1,135.8" fill="#5c3628" />
<polygon points="156.9,129.3 159.0,123.7 165.1,120.6 170.7,122.6 172.0,125.1 161.3,132.1" fill="#bfa574" />
<polygon points="171.3,132.1 186.4,131.6 188.1,138.4 175.3,137.1" fill="#466832" />
<polygon points="171.3,140.0 183.9,136.8 188.1,140.9 177.6,147.1" fill="#bfa574" />
<polygon points="182.6,148.1 190.1,147.5 200.2,158.4 195.1,163.2" fill="#466832" opacity="0.7"/>
<polygon points="200.2,160.7 210.2,164.2 214.2,168.2 212.1,171.4 203.3,169.7" fill="#2b522d" />
<polygon points="195.8,111.8 198.9,109.5 202.2,111.8 203.4,126.8 204.7,156.9 197.6,155.9 192.0,148.1 190.1,139.4 192.6,126.8" fill="#5c3628" />
<polygon points="195.8,111.8 198.9,109.5 202.2,111.8 202.9,122.6 194.6,123.1" fill="#2b522d" />
<polygon points="191.4,135.6 194.1,129.3 195.1,153.1 192.4,148.1" fill="#2f2a24" />
<polygon points="194.6,129.6 202.7,128.1 203.2,150.6 196.6,153.4" fill="#86877a" />
<polygon points="201.4,135.6 204.4,135.6 204.9,156.9 202.2,156.6" fill="#3a2a22" />
<polygon points="194.1,129.3 196.9,128.8 197.1,133.3 194.4,133.8" fill="#c83434" />
<polygon points="245.9,136.8 251.0,137.1 251.0,139.6 245.9,139.4" fill="#d04040" />
<polygon points="105.6,152.4 110.7,152.0 110.7,154.2 105.6,154.7" fill="#d04040" />
<polygon points="158.3,129.3 160.3,128.8 160.8,132.6 158.8,133.1" fill="#c83434" />
      </g>
    </g>
  </svg>
  <div class="abs" style="left:710px;top:311.8px;width:195.5px;height:10px;background:#4a4a4a"></div>
  <div class="t" style="left:712px;top:314.6px;font-size:4.6px;color:#d8d8d8;word-spacing:0.5px;letter-spacing:0.1px">File View Location Autopilot Environment Equipment AI Multiplayer Debug Help Su-25</div>

</div>
</div>


<!-- ================= STATUS BAR ================= -->
<div class="abs" style="left:0;top:624px;width:1080px;height:15px;background:#f0f0f0"></div>
<div class="abs" style="left:512.5px;top:632.5px;width:6.5px;height:1px;background:#555"></div>
<div class="t" style="left:529.5px;top:628.5px;font-size:8.6px;color:#777">85%</div>
<div class="abs" style="left:557px;top:632.5px;width:7px;height:1px;background:#555"></div>
<div class="abs" style="left:560px;top:629.5px;width:1px;height:7px;background:#555"></div>
</body>
</html>
